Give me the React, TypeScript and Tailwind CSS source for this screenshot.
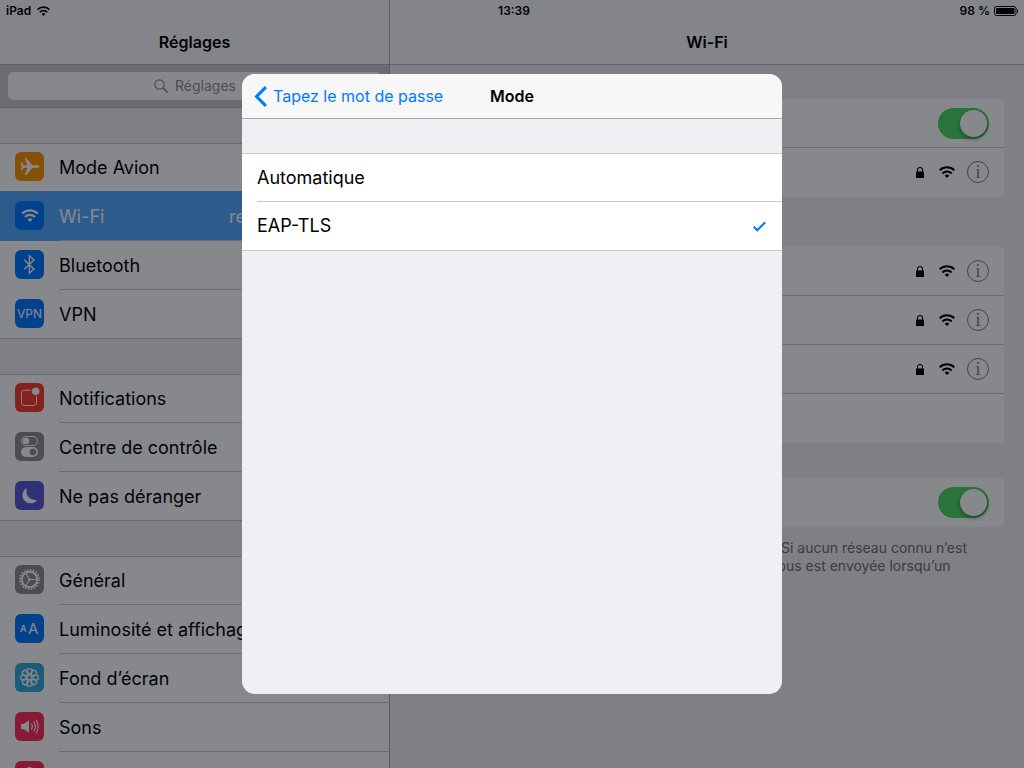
import { useState } from 'react';
import type { ReactNode } from 'react';

interface MenuItem {
  label: string;
  tile: string;
  icon: ReactNode;
  value?: string;
  selected?: boolean;
}

function WifiIcon({ className }: { className?: string }) {
  return (
    <svg viewBox="0 0 16 12" className={className} fill="none" stroke="currentColor" strokeWidth="2.1" aria-hidden="true">
      <path d="M.7 4.200a10.400 10.400 0 0 1 14.600 0" />
      <path d="M3.400 7.400a6.500 6.500 0 0 1 9.200 0" />
      <path d="M8 12 5.700 9.700a3.300 3.300 0 0 1 4.600 0z" fill="currentColor" stroke="none" />
    </svg>
  );
}

function PlaneIcon() {
  return (
    <svg viewBox="0 0 29 29" className="size-full" fill="#fff" aria-hidden="true">
      <path d="M24.400 14.500c0-.8-1-1.300-2.200-1.300h-4.900L11.400 6H9.700l2.900 7.200H8.800L7 10.400H6l.6 4.100-.6 4.100h1l1.800-2.800h3.800L9.700 23h1.700l5.900-7.200h4.900c1.200 0 2.200-.5 2.200-1.300z" />
    </svg>
  );
}

function BluetoothIcon() {
  return (
    <svg viewBox="0 0 29 29" className="size-full" fill="none" stroke="#fff" strokeWidth="1.400" aria-hidden="true">
      <path d="M9.200 9.800l9.800 9.200-4.600 4.200V5.800L19 10l-9.800 9.200" />
    </svg>
  );
}

function NotificationsIcon() {
  return (
    <svg viewBox="0 0 29 29" className="size-full" aria-hidden="true">
      <path d="M16 7.200H9.500a3 3 0 0 0-3 3v9.300a3 3 0 0 0 3 3h9a3 3 0 0 0 3-3v-6.600" fill="none" stroke="#fff" strokeWidth="1" />
      <circle cx="20.700" cy="8.300" r="3.800" fill="#fff" />
    </svg>
  );
}

function ControlCenterIcon() {
  return (
    <svg viewBox="0 0 29 29" className="size-full" aria-hidden="true">
      <rect x="6.500" y="4.500" width="16" height="9" rx="4.500" fill="none" stroke="#fff" />
      <circle cx="11" cy="9" r="3.300" fill="#fff" />
      <rect x="6" y="15" width="17" height="10" rx="5" fill="#fff" />
      <circle cx="18" cy="20" r="3.300" fill="#8e8e93" />
    </svg>
  );
}

function MoonIcon() {
  return (
    <svg viewBox="0 0 29 29" className="size-full" fill="#fff" aria-hidden="true">
      <path d="M12 7.100a8.900 8.900 0 0 0 10 11.800A8 8 0 1 1 12 7.100z" />
    </svg>
  );
}

function GearIcon() {
  return (
    <svg viewBox="0 0 29 29" className="size-full" fill="none" stroke="#fff" aria-hidden="true">
      <circle cx="14.500" cy="14.500" r="9.400" strokeWidth="2.200" strokeDasharray="1.480 1.480" />
      <circle cx="14.500" cy="14.500" r="7.700" strokeWidth="1.900" />
      <path d="M14.500 14.500h7M14.500 14.500 11 8.400M14.500 14.500 11 20.600" strokeWidth="1.100" />
      <circle cx="14.500" cy="14.500" r="1.300" fill="#fff" stroke="none" />
    </svg>
  );
}

function TextSizeIcon() {
  return (
    <svg viewBox="0 0 29 29" className="size-full" fill="#fff" fontFamily="Inter, sans-serif" aria-hidden="true">
      <text x="5" y="18" fontSize="9" fontWeight="600">A</text>
      <text x="13" y="20" fontSize="15">A</text>
    </svg>
  );
}

function FlowerIcon() {
  const petals = [0, 45, 90, 135, 180, 225, 270, 315];
  return (
    <svg viewBox="0 0 29 29" className="size-full" fill="none" stroke="#fff" strokeWidth="1.200" aria-hidden="true">
      <circle cx="14.500" cy="14.500" r="2.300" />
      {petals.map(angle => (
        <circle key={angle} cx="14.500" cy="8.300" r="2.700" transform={`rotate(${angle} 14.500 14.500)`} />
      ))}
    </svg>
  );
}

function SoundIcon() {
  return (
    <svg viewBox="0 0 29 29" className="size-full" fill="none" stroke="#fff" strokeWidth="1.200" aria-hidden="true">
      <path d="M6 11.800h3l5-3.600v12.600l-5-3.600H6z" fill="#fff" stroke="none" />
      <path d="M16.200 11.500a5 5 0 0 1 0 6M18.600 9.600a8 8 0 0 1 0 9.800M21 7.800a11.500 11.500 0 0 1 0 13.400" />
    </svg>
  );
}

function LockTileIcon() {
  return (
    <svg viewBox="0 0 29 29" className="size-full" fill="none" stroke="#fff" strokeWidth="2" aria-hidden="true">
      <circle cx="14.500" cy="11" r="4" />
      <path d="M14.500 15v9" />
    </svg>
  );
}

const menuGroups: MenuItem[][] = [
  [
    { label: 'Mode Avion', tile: 'bg-[#ff9500]', icon: <PlaneIcon /> },
    {
      label: 'Wi-Fi',
      tile: 'bg-[#007aff]',
      icon: <WifiIcon className="h-[13px] w-[18px] text-white" />,
      value: 're',
      selected: true,
    },
    { label: 'Bluetooth', tile: 'bg-[#007aff]', icon: <BluetoothIcon /> },
    { label: 'VPN', tile: 'bg-[#007aff]', icon: <span className="text-xs text-white">VPN</span> },
  ],
  [
    { label: 'Notifications', tile: 'bg-[#ff3b30]', icon: <NotificationsIcon /> },
    { label: 'Centre de contrôle', tile: 'bg-[#8e8e93]', icon: <ControlCenterIcon /> },
    { label: 'Ne pas déranger', tile: 'bg-[#5856d6]', icon: <MoonIcon /> },
  ],
  [
    { label: 'Général', tile: 'bg-[#8e8e93]', icon: <GearIcon /> },
    { label: 'Luminosité et affichage', tile: 'bg-[#007aff]', icon: <TextSizeIcon /> },
    { label: 'Fond d’écran', tile: 'bg-[#35aadc]', icon: <FlowerIcon /> },
    { label: 'Sons', tile: 'bg-[#ff2d55]', icon: <SoundIcon /> },
    { label: '', tile: 'bg-[#ff2d55]', icon: <LockTileIcon /> },
  ],
];

function StatusBar() {
  return (
    <div className="absolute inset-x-0 top-0 grid h-[22px] grid-cols-[1fr_auto_1fr] items-center px-1.5 text-xs font-semibold">
      <div className="flex items-center gap-1.5">
        <span>iPad</span>
        <WifiIcon className="h-[10px] w-[13px]" />
      </div>
      <span className="pl-1">13:39</span>
      <div className="flex items-center justify-end gap-1">
        <span>98 %</span>
        <svg viewBox="0 0 24 10" className="h-[10px] w-6" aria-hidden="true">
          <rect x=".5" y=".5" width="21.500" height="9" rx="2" fill="none" stroke="#000" />
          <rect x="2" y="2" width="18.500" height="6" rx=".8" />
          <path d="M23 3c.6.300 1 1 1 2s-.4 1.700-1 2z" />
        </svg>
      </div>
    </div>
  );
}

function MenuRow({ item }: { item: MenuItem }) {
  return (
    <li className={item.selected ? 'relative bg-[#51a9ff] text-white shadow-[0_-1px_0_#51a9ff]' : ''}>
      <a href="#" className="flex h-[49px] pl-[15px]">
        <span className={`mt-[9px] flex size-[29px] shrink-0 items-center justify-center rounded-md ${item.tile}`}>
          {item.icon}
        </span>
        <span className="ml-[15px] flex flex-1 items-center justify-between border-b border-[#c8c7cc] pt-0.5 pr-[143px]">
          <span className="whitespace-nowrap">{item.label}</span>
          {item.value && <span>{item.value}</span>}
        </span>
      </a>
    </li>
  );
}

function Sidebar() {
  return (
    <aside className="flex w-[390px] shrink-0 flex-col border-r border-[#a7a7aa] bg-[#efeff4]">
      <header className="flex h-[65px] shrink-0 items-center justify-center border-b border-[#b2b2b2] bg-[#f9f9f9] pt-5">
        <h1 className="font-semibold">Réglages</h1>
      </header>
      <div className="flex h-[43px] shrink-0 items-center border-b border-[#b8b8bd] bg-[#c9c9ce] px-2">
        <label className="flex h-7 flex-1 items-center justify-center gap-[7px] rounded-[5px] bg-white text-[#8e8e93]">
          <svg viewBox="0 0 14 14" className="size-[14px]" fill="none" stroke="currentColor" strokeWidth="1.200" aria-hidden="true">
            <circle cx="5.500" cy="5.500" r="4.700" />
            <path d="M9 9l4.500 4.500" strokeWidth="1.600" />
          </svg>
          <input
            type="text"
            aria-label="Rechercher"
            placeholder="Réglages"
            className="w-[60px] bg-transparent text-sm outline-none placeholder:text-[#8e8e93]"
          />
        </label>
      </div>
      {menuGroups.map((group, index) => (
        <ul key={index} className="mt-[35px] shrink-0 bg-white text-lg shadow-[inset_0_1px_0_#c8c7cc,inset_0_-1px_0_#c8c7cc]">
          {group.map(item => (
            <MenuRow key={item.label} item={item} />
          ))}
        </ul>
      ))}
    </aside>
  );
}

function Toggle({ label }: { label: string }) {
  const [on, setOn] = useState(true);
  return (
    <input
      type="checkbox"
      role="switch"
      aria-label={label}
      checked={on}
      onChange={() => setOn(!on)}
      className="h-[31px] w-[51px] appearance-none rounded-full bg-[#e5e5ea] p-0.5 before:block before:size-[27px] before:rounded-full before:bg-white before:shadow-[0_2px_4px_rgba(0,0,0,0.4)] checked:bg-[#4cd964] checked:before:ml-5"
    />
  );
}

function NetworkRow() {
  return (
    <li className="flex h-[49px] items-center justify-end border-b border-[#c8c7cc] pr-[15px] last:border-transparent">
      <svg viewBox="0 0 8 11" className="h-[11px] w-2" aria-hidden="true">
        <rect y="4.600" width="8" height="6.400" rx=".3" />
        <path d="M1.500 5.500V3a2.500 2.500 0 0 1 5 0v2.500" fill="none" stroke="#000" strokeWidth="1.100" />
      </svg>
      <WifiIcon className="ml-[15px] h-3 w-4" />
      <button
        type="button"
        aria-label="Plus d’infos"
        className="ml-3 flex size-[22px] items-center justify-center rounded-full border border-[#7f7f84] font-['Liberation_Serif',serif] text-lg leading-none text-[#7f7f84]"
      >
        i
      </button>
    </li>
  );
}

function WifiPane() {
  return (
    <main className="flex min-w-0 flex-1 flex-col bg-[#efeff4]">
      <header className="flex h-[65px] shrink-0 items-center justify-center border-b border-[#b2b2b2] bg-[#f9f9f9] pt-5">
        <h2 className="font-semibold">Wi-Fi</h2>
      </header>
      <div className="px-5">
        <ul className="mt-[34px] rounded bg-white">
          <li className="flex h-[49px] items-center justify-end border-b border-[#c8c7cc] pr-[15px]">
            <Toggle label="Wi-Fi" />
          </li>
          <NetworkRow />
        </ul>
        <ul className="mt-[50px] rounded bg-white">
          <NetworkRow />
          <NetworkRow />
          <NetworkRow />
          <li className="h-[49px]" />
        </ul>
        <div className="mt-[35px] flex h-[49px] items-center justify-end rounded bg-white pr-[15px]">
          <Toggle label="Confirmer l’accès" />
        </div>
        <p className="mt-3 ml-[360px] indent-[11px] text-sm/[18px] text-[#6d6d72]">
          Si aucun réseau connu n’est
          <br />
          vous est envoyée lorsqu’un
        </p>
      </div>
    </main>
  );
}

function ModeDialog() {
  const [mode, setMode] = useState('EAP-TLS');
  return (
    <div className="absolute inset-0 flex items-center justify-center bg-[#04070f]/48">
      <section
        role="dialog"
        aria-label="Mode"
        className="flex h-[620px] w-[540px] flex-col overflow-hidden rounded-[13px] bg-[#efeff4]"
      >
        <header className="grid h-[45px] shrink-0 grid-cols-[1fr_auto_1fr] items-center border-b border-[#a8a7ac] bg-[#f7f7f8] px-3 text-base">
          <button type="button" className="flex items-center gap-1.5 text-[#007aff]">
            <svg viewBox="0 0 13 21" className="h-[21px] w-[13px]" fill="none" stroke="currentColor" strokeWidth="3" aria-hidden="true">
              <path d="M11.900 1.100 2.500 10.500l9.400 9.400" />
            </svg>
            Tapez le mot de passe
          </button>
          <h2 className="font-semibold">Mode</h2>
        </header>
        <div className="mt-[34px] border-y border-[#c8c7cc] bg-white text-lg">
          {['Automatique', 'EAP-TLS'].map(option => (
            <label key={option} className="group flex h-12 pl-[15px]">
              <input
                type="radio"
                name="mode"
                checked={mode === option}
                onChange={() => setMode(option)}
                className="sr-only"
              />
              <span className="flex flex-1 items-center justify-between border-b border-[#c8c7cc] pr-4 group-last:border-b-0">
                {option}
                {mode === option && (
                  <svg viewBox="0 0 13 11" className="h-[11px] w-[13px]" fill="none" stroke="#007aff" strokeWidth="2.200" aria-hidden="true">
                    <path d="M.8 5.700 4.300 9.200 12.200 1.300" />
                  </svg>
                )}
              </span>
            </label>
          ))}
        </div>
      </section>
    </div>
  );
}

export default function App() {
  return (
    <div className="relative h-screen overflow-hidden bg-[#efeff4] font-[Inter,'Liberation_Sans',sans-serif] text-black">
      <div className="flex h-full overflow-hidden">
        <Sidebar />
        <WifiPane />
      </div>
      <StatusBar />
      <ModeDialog />
    </div>
  );
}
